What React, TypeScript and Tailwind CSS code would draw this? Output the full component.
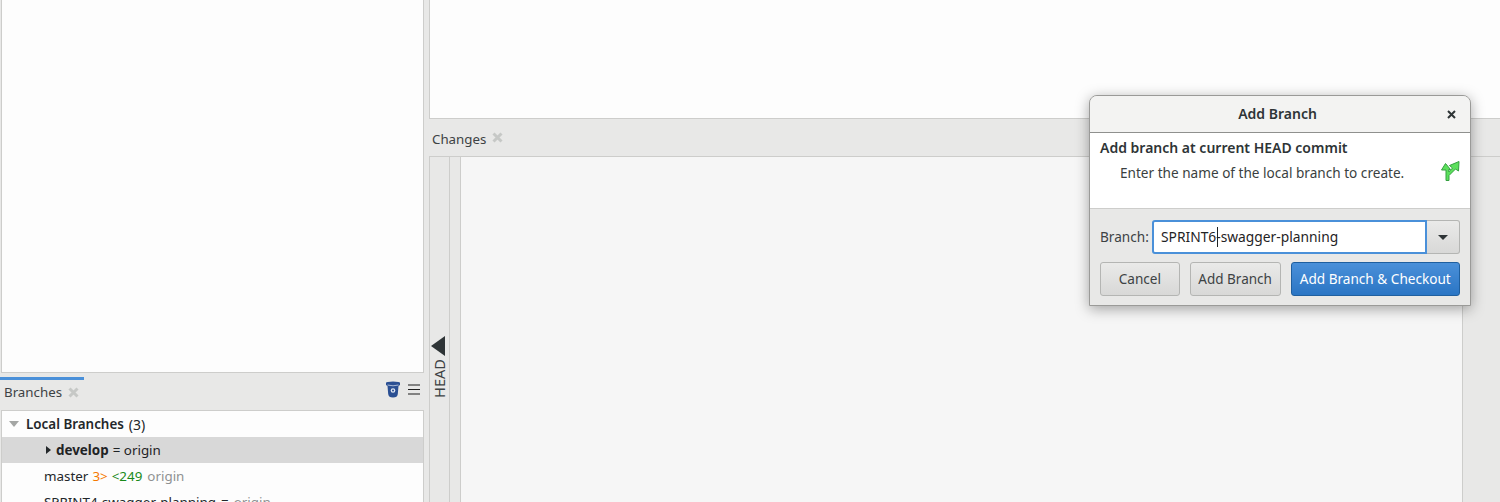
import React from "react";

const font = { fontFamily: '"Noto Sans", sans-serif' };

function XMark({ className }: { className?: string }) {
  return (
    <svg width="11" height="11" viewBox="0 0 11 11" className={className}>
      <path d="M1.5 1.5 L9.5 9.5 M9.5 1.5 L1.5 9.5" stroke="#c6c8c6" strokeWidth="3" />
    </svg>
  );
}

function Bucket() {
  return (
    <svg width="14" height="17" viewBox="0 0 14 17">
      <path d="M0 2 Q0 0.5 7 0.5 Q14 0.5 14 2 L14 4 L12.5 5 L11.8 13 Q11.5 16.5 7 16.5 Q2.5 16.5 2.2 13 L1.5 5 L0 4 Z" fill="#2a4f93" />
      <path d="M1.5 4 Q7 5.6 12.5 4" stroke="#a9b9d6" strokeWidth="1" fill="none" />
      <circle cx="7" cy="9.5" r="2.3" fill="#dfe6f2" />
      <circle cx="7" cy="9.5" r="1" fill="#2a4f93" />
    </svg>
  );
}

function BranchIcon() {
  return (
    <svg width="20" height="22" viewBox="0 0 20 22">
      <path
        d="M6 20.5 V10 H1.5 L5.5 3.5 L10.5 9.5 H8.8 V12 L12.5 8 L9.5 5.5 L19 1.5 L18.5 11 L15.5 9 L9 15.5 V20.5 Z"
        fill="#5ce05c"
        stroke="#35a040"
        strokeWidth="1"
        strokeLinejoin="round"
      />
    </svg>
  );
}

export default function App() {
  return (
    <div className="relative flex h-[502px] w-[1500px] overflow-hidden bg-[#e8e8e7] text-[13.6px] text-[#2e3436]" style={font}>
      <div className="flex h-full w-[429px] shrink-0 flex-col">
        <div className="ml-px h-[373px] w-[423px] shrink-0 border-r border-b border-l border-[#cdcdcb] bg-[#fdfdfd]" />
        <div className="mt-1 h-[3px] w-[84px] shrink-0 bg-[#4a90d9]" />
        <div className="flex h-[30px] w-[424px] shrink-0 items-center pb-[4px] pl-1">
          <span className="text-[13.3px] text-[#3d4244]">Branches</span>
          <XMark className="ml-[6px] mb-[2px]" />
          <div className="mb-[8px] ml-auto flex items-center gap-[8px] pr-[4px]">
            <Bucket />
            <svg width="12" height="11" viewBox="0 0 12 11">
              <path d="M0 1 H12 M0 5.5 H12 M0 10 H12" stroke="#1d1d1d" strokeWidth="1" />
            </svg>
          </div>
        </div>
        <div className="ml-px flex min-h-0 w-[423px] flex-1 flex-col overflow-hidden border-t border-r border-l border-[#cdcdcb] bg-[#fdfdfd] text-[13.4px]">
          <div className="flex h-[26px] shrink-0 items-center pl-[6px]">
            <svg width="12" height="8" viewBox="0 0 12 8">
              <path d="M1 1 H11 L6 7 Z" fill="#a4a6a4" />
            </svg>
            <span className="ml-[6px] font-semibold text-[#23272a]">Local Branches</span>
            <span className="ml-[5px] text-[14px] text-[#23272a]">(3)</span>
          </div>
          <div className="flex h-[26px] shrink-0 items-center bg-[#d8d8d8] pl-[44px] text-[#1f2325]">
            <svg width="5" height="8" viewBox="0 0 5 8">
              <path d="M0 0 L5 4 L0 8 Z" fill="#23272a" />
            </svg>
            <span className="ml-[5px] font-bold">develop</span>
            <span className="ml-[4px]">= origin</span>
          </div>
          <div className="flex h-[26px] shrink-0 items-center pl-[42px] text-[#23272a]">
            <span>master</span>
            <span className="ml-[4px] text-[#f57900]">3&gt;</span>
            <span className="ml-[4px] text-[#198a19]">&lt;249</span>
            <span className="ml-[5px] text-[#8f9192]">origin</span>
          </div>
          <div className="flex h-[26px] shrink-0 items-center pl-[42px] text-[#23272a]">
            <span>SPRINT4-swagger-planning</span>
            <span className="ml-[5px]">=</span>
            <span className="ml-[5px] text-[#8f9192]">origin</span>
          </div>
        </div>
      </div>

      <div className="flex h-full min-w-0 flex-1 flex-col">
        <div className="h-[119px] shrink-0 border-b border-l border-[#cdcdcb] bg-[#fdfdfd]" />
        <div className="flex h-[37px] shrink-0 items-center pl-[3px] pt-[4px]">
          <span className="text-[13.3px] text-[#3d4244]">Changes</span>
          <XMark className="ml-[6px] mb-[5px]" />
        </div>
        <div className="flex min-h-0 flex-1">
          <div className="flex h-full w-[21px] shrink-0 flex-col items-center border-t border-r border-l border-[#cdcdcb] pt-[179px]">
            <svg width="14" height="20" viewBox="0 0 14 20" className="ml-[-3px] shrink-0">
              <path d="M14 0 V20 L0 10 Z" fill="#2e3436" />
            </svg>
            <span className="ml-[-2px] mt-[3px] rotate-180 text-[14.6px] leading-[14px] text-[#3d4244] [writing-mode:vertical-rl]">HEAD</span>
          </div>
          <div className="h-full w-[11px] shrink-0 border-t border-r border-[#cdcdcb]" />
          <div className="h-full w-[1002px] shrink-0 border-t border-r border-[#cdcdcb] bg-[#f6f6f6]" />
          <div className="h-full flex-1 border-t border-[#cdcdcb]" />
        </div>
      </div>

      <div className="absolute left-[1089px] top-[95px] flex h-[211px] w-[382px] flex-col overflow-hidden rounded-t-[8px] border border-[#9a9a98] bg-[#e8e8e7] shadow-[0_3px_14px_rgba(0,0,0,0.35)]">
        <div className="relative flex h-[37px] shrink-0 items-center justify-center border-b border-[#8f908e] bg-[#f3f3f2] pb-[2px] pr-[5px]">
          <span className="text-[14px] font-semibold text-[#2e3436]">Add Branch</span>
          <svg width="9" height="9" viewBox="0 0 9 9" className="absolute right-[14px] top-[14px]">
            <path d="M1 1 L8 8 M8 1 L1 8" stroke="#2e3436" strokeWidth="2" />
          </svg>
        </div>
        <div className="flex h-[76px] shrink-0 border-b border-[#cdcdcb] bg-white pl-[10px]">
          <div className="flex flex-1 flex-col pt-[5px]">
            <div className="h-[20px] text-[14px] font-semibold leading-[20px]">Add branch at current HEAD commit</div>
            <div className="mt-[5px] pl-[20px] leading-[20px] text-[#3a3f41]">Enter the name of the local branch to create.</div>
          </div>
          <div className="pr-[10px] pt-[27px]">
            <BranchIcon />
          </div>
        </div>
        <div className="flex flex-1 flex-col gap-[8px] px-[10px] pt-[11px]">
          <div className="flex h-[34px] items-center">
            <span className="w-[52px] shrink-0 text-[#3d4244]">Branch:</span>
            <div className="relative flex h-[34px] w-[276px] items-center rounded-l-[3px] border-2 border-[#4a90d9] bg-white pl-[7px] text-[13.8px] text-[#1f2325]">
              SPRINT6-swagger-planning
              <span className="absolute left-[63px] top-[5px] h-[20px] w-px bg-[#1f2325]" />
            </div>
            <div className="flex h-[34px] w-[33px] items-center justify-center rounded-r-[3px] border border-l-0 border-[#b4b5b3] bg-gradient-to-b from-[#eaeae9] to-[#d8d8d7]">
              <svg width="10" height="5" viewBox="0 0 10 5">
                <path d="M0 0 H10 L5 5 Z" fill="#2e3436" />
              </svg>
            </div>
          </div>
          <div className="flex h-[34px]">
            <div className="flex w-[80px] items-center justify-center rounded-[3px] border border-[#b4b5b3] bg-gradient-to-b from-[#eaeae9] to-[#d8d8d7] text-[#3d4244]">Cancel</div>
            <div className="ml-[10px] flex w-[91px] items-center justify-center rounded-[3px] border border-[#b4b5b3] bg-gradient-to-b from-[#eaeae9] to-[#d8d8d7] text-[13.5px] text-[#3d4244]">Add Branch</div>
            <div className="ml-[10px] flex w-[170px] items-center justify-center rounded-[3px] border border-[#1f5f9f] bg-gradient-to-b from-[#4a90d9] to-[#2a75c4] text-white">Add Branch &amp; Checkout</div>
          </div>
        </div>
      </div>
    </div>
  );
}
